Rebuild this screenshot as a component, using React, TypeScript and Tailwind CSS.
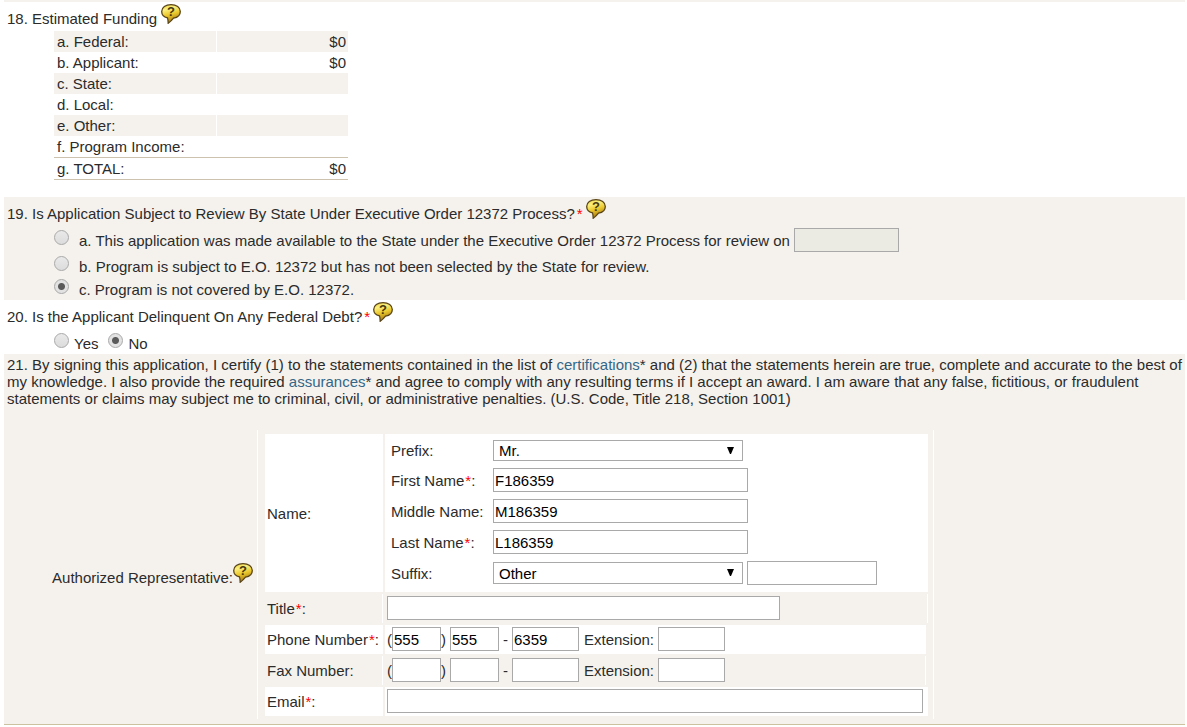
import { useState } from "react";
import type { ComponentProps } from "react";

const funding = [
  { label: "a. Federal:", amount: "$0" },
  { label: "b. Applicant:", amount: "$0" },
  { label: "c. State:", amount: "" },
  { label: "d. Local:", amount: "" },
  { label: "e. Other:", amount: "" },
  { label: "f. Program Income:", amount: "" },
];

const HelpButton = ({ about }: { about: string }) => (
  <button type="button" aria-label={`Help: ${about}`} className="inline cursor-pointer">
    <svg width="20" height="20" viewBox="0 0 20 20" className="inline align-baseline">
      <defs>
        <linearGradient id="bubble" x1="0" y1="0" x2="0.3" y2="1">
          <stop offset="0" stopColor="#e8cf3a" />
          <stop offset="0.3" stopColor="#fbef7e" />
          <stop offset="0.6" stopColor="#ecc92e" />
          <stop offset="1" stopColor="#a87a10" />
        </linearGradient>
      </defs>
      <path
        d="M10 .7C4.600.7.7 3.500.7 7.400c0 3.300 2.300 5.600 5.800 6.500.5 1.500.7 3.200.7 5.400 1.900-1.400 3.700-3.200 5.300-5.200 4.100-.7 6.800-3.300 6.800-6.700C19.300 3.500 15.400.7 10 .7z"
        fill="url(#bubble)"
        stroke="#5a4516"
        strokeWidth="1.3"
      />
      <text
        x="10"
        y="12"
        textAnchor="middle"
        fontSize="13"
        fontWeight="700"
        fontFamily="Liberation Sans, Arial, sans-serif"
        fill="#46390f"
      >
        ?
      </text>
    </svg>
  </button>
);

const Required = ({ className = "ml-px" }: { className?: string }) => (
  <span className={`text-[#ff0000] ${className}`}>*</span>
);

const Radio = (props: ComponentProps<"input">) => (
  <input
    type="radio"
    className="size-[15px] shrink-0 appearance-none rounded-full border border-[#a9a9a9] bg-[linear-gradient(#e9e9e9,#dcdcdc)] checked:bg-[radial-gradient(circle,#5a5a5a_0,#5a5a5a_3px,#e2e2e2_4px)]"
    {...props}
  />
);

const TextInput = ({ className, ...props }: ComponentProps<"input">) => (
  <input
    type="text"
    className={`h-6 border border-[#a9a9a9] bg-white px-px text-black disabled:bg-[#ebebe4] ${className}`}
    {...props}
  />
);

const Select = ({ className, children, ...props }: ComponentProps<"select">) => (
  <div className="relative w-[250px]">
    <select
      className={`block w-full appearance-none border border-[#a9a9a9] bg-white pl-[5px] leading-[17px] text-black ${className}`}
      {...props}
    >
      {children}
    </select>
    <svg
      width="8"
      height="7"
      viewBox="0 0 8 7"
      className="pointer-events-none absolute top-[7px] right-2"
    >
      <path d="M0 0h7L4 7H3z" fill="#000" />
    </svg>
  </div>
);

interface PhoneProps {
  name: string;
  id: string;
  values: string[];
}

const PhoneFields = ({ name, id, values }: PhoneProps) => (
  <div className="flex items-center">
    <span>(</span>
    <TextInput id={id} defaultValue={values[0]} className="w-[49px]" />
    <span>)</span>
    <TextInput aria-label={`${name} exchange`} defaultValue={values[1]} className="ml-1 w-[49px]" />
    <span className="mx-1">-</span>
    <TextInput aria-label={`${name} line`} defaultValue={values[2]} className="w-[67px]" />
    <label htmlFor={`${id}-ext`} className="mr-1 ml-[5px]">
      Extension:
    </label>
    <TextInput id={`${id}-ext`} className="w-[67px]" />
  </div>
);

const App = () => {
  const [review, setReview] = useState("c");
  const [debt, setDebt] = useState("no");

  return (
    <main className="pr-0.5 pl-1 font-['Liberation_Sans',Arial,sans-serif] text-[15px] leading-[17px] text-[#2b2b2b]">
      <section className="border-t-2 border-[#f5f2ed] pt-0.5 pb-[17px]">
        <h2 className="pl-[3px]">
          18. Estimated Funding <HelpButton about="Estimated Funding" />
        </h2>
        <table className="mt-1 ml-[50px] w-[294px] table-fixed border-separate border-spacing-0">
          <tbody>
            {funding.map((row) => (
              <tr key={row.label} className="odd:bg-[#f5f2ed]">
                <th scope="row" className="w-[163px] border-r border-white px-[3px] py-0.5 text-left font-normal">
                  {row.label}
                </th>
                <td className="px-0.5 py-0.5 text-right">{row.amount}</td>
              </tr>
            ))}
            <tr>
              <th scope="row" className="border-y border-[#cdc2ae] px-[3px] py-0.5 text-left font-normal">
                g. TOTAL:
              </th>
              <td className="border-y border-[#cdc2ae] px-0.5 py-0.5 text-right">$0</td>
            </tr>
          </tbody>
        </table>
      </section>

      <section className="bg-[#f5f2ed] pt-0.5 pb-0.5">
        <h2 className="pl-[3px]">
          19. Is Application Subject to Review By State Under Executive Order 12372 Process?
          <Required className="mr-[3px] ml-0.5" />
          <HelpButton about="State review" />
        </h2>
        <div className="mt-1.5 flex flex-col gap-1 pl-[50px]">
          <div className="flex items-start gap-1">
            <label className="flex items-start gap-2.5 pt-0.5">
              <Radio name="review" checked={review === "a"} onChange={() => setReview("a")} />
              <span className="pt-0.5">
                a. This application was made available to the State under the Executive Order 12372 Process for review on
              </span>
            </label>
            <TextInput aria-label="Review date" disabled={review !== "a"} className="w-[105px]" />
          </div>
          <label className="flex items-start gap-2.5">
            <Radio name="review" checked={review === "b"} onChange={() => setReview("b")} />
            <span className="pt-0.5">
              b. Program is subject to E.O. 12372 but has not been selected by the State for review.
            </span>
          </label>
          <label className="flex items-start gap-2.5">
            <Radio name="review" checked={review === "c"} onChange={() => setReview("c")} />
            <span className="pt-0.5">c. Program is not covered by E.O. 12372.</span>
          </label>
        </div>
      </section>

      <section className="pt-0.5 pb-0.5">
        <h2 className="pl-[3px]">
          20. Is the Applicant Delinquent On Any Federal Debt?
          <Required className="mr-[3px] ml-0.5" />
          <HelpButton about="Federal debt" />
        </h2>
        <div className="mt-2 flex gap-2.5 pl-[50px]">
          <label className="flex items-start gap-[5px]">
            <Radio name="debt" checked={debt === "yes"} onChange={() => setDebt("yes")} />
            <span className="pt-0.5">Yes</span>
          </label>
          <label className="flex items-start gap-[5px]">
            <Radio name="debt" checked={debt === "no"} onChange={() => setDebt("no")} />
            <span className="pt-0.5">No</span>
          </label>
        </div>
      </section>

      <section className="border-b border-[#cdc2a0] bg-[#f5f2ed] pt-0.5 pb-[5px]">
        <p className="pl-[3px]">
          21. By signing this application, I certify (1) to the statements contained in the list of{" "}
          <a href="#certifications" className="text-[#336688]">
            certifications
          </a>
          * and (2) that the statements herein are true, complete and accurate to the best of my knowledge. I also
          provide the required{" "}
          <a href="#assurances" className="text-[#336688]">
            assurances
          </a>
          * and agree to comply with any resulting terms if I accept an award. I am aware that any false, fictitious,
          or fraudulent statements or claims may subject me to criminal, civil, or administrative penalties. (U.S.
          Code, Title 218, Section 1001)
        </p>

        <div className="mt-[23px] flex items-center">
          <h3 className="w-[253px] shrink-0 pr-1 text-right">
            Authorized Representative:
            <HelpButton about="Authorized Representative" />
          </h3>
          <div className="grid w-full max-w-[677px] grid-cols-[118px_1fr] gap-0.5 border-x border-white pt-1 pr-[5px] pb-[3px] pl-[7px]">
            <div className="flex items-center bg-white pl-0.5">Name:</div>
            <div className="flex flex-col gap-[7px] bg-white pt-1.5 pb-[7px] pl-1.5">
              <div className="flex items-center">
                <label htmlFor="prefix" className="w-[102px]">
                  Prefix:
                </label>
                <Select id="prefix" defaultValue="Mr." className="h-[21px]">
                  <option>Mr.</option>
                  <option>Mrs.</option>
                </Select>
              </div>
              <div className="flex items-center">
                <label htmlFor="first" className="w-[102px]">
                  First Name
                  <Required />:
                </label>
                <TextInput id="first" defaultValue="F186359" className="w-[255px]" />
              </div>
              <div className="flex items-center">
                <label htmlFor="middle" className="w-[102px]">
                  Middle Name:
                </label>
                <TextInput id="middle" defaultValue="M186359" className="w-[255px]" />
              </div>
              <div className="flex items-center">
                <label htmlFor="last" className="w-[102px]">
                  Last Name
                  <Required />:
                </label>
                <TextInput id="last" defaultValue="L186359" className="w-[255px]" />
              </div>
              <div className="flex items-center">
                <label htmlFor="suffix" className="w-[102px]">
                  Suffix:
                </label>
                <Select id="suffix" defaultValue="Other" className="h-[22px]">
                  <option>Other</option>
                  <option>Jr.</option>
                </Select>
                <TextInput aria-label="Other suffix" className="ml-1 w-[130px]" />
              </div>
            </div>

            <div className="flex items-center border-r border-white pl-0.5">
              <label htmlFor="title">
                Title
                <Required />:
              </label>
            </div>
            <div className="border-r border-white px-0.5 pt-0.5 pb-[3px]">
              <TextInput id="title" className="block w-full max-w-[393px]" />
            </div>

            <div className="flex items-center bg-white pl-0.5">
              <label htmlFor="phone">
                Phone Number
                <Required />:
              </label>
            </div>
            <div className="mr-0.5 bg-white px-0.5 pt-0.5 pb-[3px]">
              <PhoneFields name="Phone" id="phone" values={["555", "555", "6359"]} />
            </div>

            <div className="flex items-center border-r border-white pl-0.5">
              <label htmlFor="fax">Fax Number:</label>
            </div>
            <div className="mr-0.5 border-r border-white px-0.5 pt-0.5 pb-[3px]">
              <PhoneFields name="Fax" id="fax" values={["", "", ""]} />
            </div>

            <div className="flex items-center bg-white pl-0.5">
              <label htmlFor="email">
                Email
                <Required />:
              </label>
            </div>
            <div className="bg-white pt-0.5 pr-[5px] pb-[3px] pl-0.5">
              <TextInput id="email" className="block w-full" />
            </div>
          </div>
        </div>
      </section>
    </main>
  );
};

export default App;
